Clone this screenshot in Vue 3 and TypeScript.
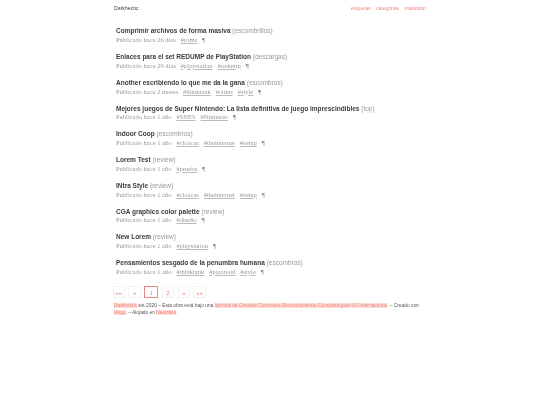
<script setup lang="ts">
interface Post { title: string; cat: string; date: string; tags: string[] }
const posts: Post[] = [
  { title: 'Comprimir archivos de forma masiva', cat: 'escombrillos', date: '26 días', tags: ['roms'] },
  { title: 'Enlaces para el set REDUMP de PlayStation', cat: 'descargas', date: '29 días', tags: ['playstation', 'redump'] },
  { title: 'Another escribiendo lo que me da la gana', cat: 'escombros', date: '2 meses', tags: ['thinktank', 'cities', 'style'] },
  { title: 'Mejores juegos de Super Nintendo: La lista definitiva de juego imprescindibles', cat: 'top', date: '1 año', tags: ['SNES', 'Nintendo'] },
  { title: 'Indoor Coop', cat: 'escombros', date: '1 año', tags: ['cloacas', 'theinternet', 'setup'] },
  { title: 'Lorem Test', cat: 'review', date: '1 año', tags: ['prueba'] },
  { title: 'INtra Style', cat: 'review', date: '1 año', tags: ['cloacas', 'theinternet', 'setup'] },
  { title: 'CGA graphics color palette', cat: 'review', date: '1 año', tags: ['diseño'] },
  { title: 'New Lorem', cat: 'review', date: '1 año', tags: ['playstation'] },
  { title: 'Pensamientos sesgado de la penumbra humana', cat: 'escombros', date: '1 año', tags: ['thinktank', 'paranoid', 'style'] },
]
const pages = ['««', '«', '1', '2', '»', '»»']
</script>

<template>
  <div class="page">
    <header class="top">
      <span class="brand">Darkhectic</span>
      <nav class="nav">
        <a>etiquetas</a>
        <a>categorías</a>
        <a>mastodon</a>
      </nav>
    </header>
    <main class="list">
      <article v-for="p in posts" :key="p.title" class="post">
        <div class="title"><strong>{{ p.title }}</strong> <span class="cat">({{ p.cat }})</span></div>
        <div class="meta">
          <span>Publicado hace {{ p.date }}</span>
          <a v-for="t in p.tags" :key="t" class="tag">#{{ t }}</a>
          <span class="pil">¶</span>
        </div>
      </article>
    </main>
    <div class="pager">
      <a v-for="g in pages" :key="g" class="pg" :class="{ on: g === '1' }">{{ g }}</a>
    </div>
    <footer class="foot">
      <mark>Darkhectic</mark> est.2020 – Esta obra está bajo una <mark>licencia de Creative Commons Reconocimiento-CompartirIgual 4.0 Internacional</mark>. – Creado con <mark>Hugo</mark>. – Alojado en <mark>Neocities</mark>.
    </footer>
  </div>
</template>

<style>
html, body { margin: 0; background: #fff; }
</style>

<style scoped>
.page {
  width: 312px;
  margin-left: 114px;
  height: 405px;
  font-family: "Liberation Sans", Arial, sans-serif;
  color: #333;
  filter: blur(0.4px);
}
.top {
  display: flex;
  justify-content: space-between;
  align-items: center;
  height: 16px;
  font-size: 5.2px;
}
.brand { color: #444; }
.nav { display: flex; gap: 5.5px; color: #ee8a80; font-size: 4.9px; }
.list {
  margin-top: 9px;
  padding-left: 2px;
  display: flex;
  flex-direction: column;
  gap: 5.75px;
}
.post { height: 20px; }
.title { font-size: 6.5px; line-height: 11px; padding-top: 0.4px; color: #999; white-space: nowrap; }
.title strong { color: #3c3c3c; font-weight: 700; }
.cat { color: #999; }
.meta {
  font-family: "Liberation Serif", "Times New Roman", serif;
  font-size: 6.5px;
  line-height: 10px;
  margin-top: -1.4px;
  color: #999;
  display: flex;
  gap: 5px;
  white-space: nowrap;
}
.tag { text-decoration: underline; text-decoration-color: #bbb; color: #999; }
.pil { color: #777; }
.pager {
  display: flex;
  gap: 3.4px;
  margin-top: 9px;
  margin-left: -1.5px;
}
.pg {
  box-sizing: border-box;
  width: 12.5px;
  height: 12.5px;
  line-height: 12px;
  text-align: center;
  border: 0.5px solid #f2f2f2;
  color: #e9897d;
  font-size: 6.2px;
}
.pg.on { border: 1px solid #e9897d; line-height: 11px; width: 14px; }
.foot {
  margin-top: 3.5px;
  font-size: 4.85px;
  line-height: 7.6px;
  color: #555;
}
mark { background: #ffdcd5; color: #ee8a80; }
</style>
